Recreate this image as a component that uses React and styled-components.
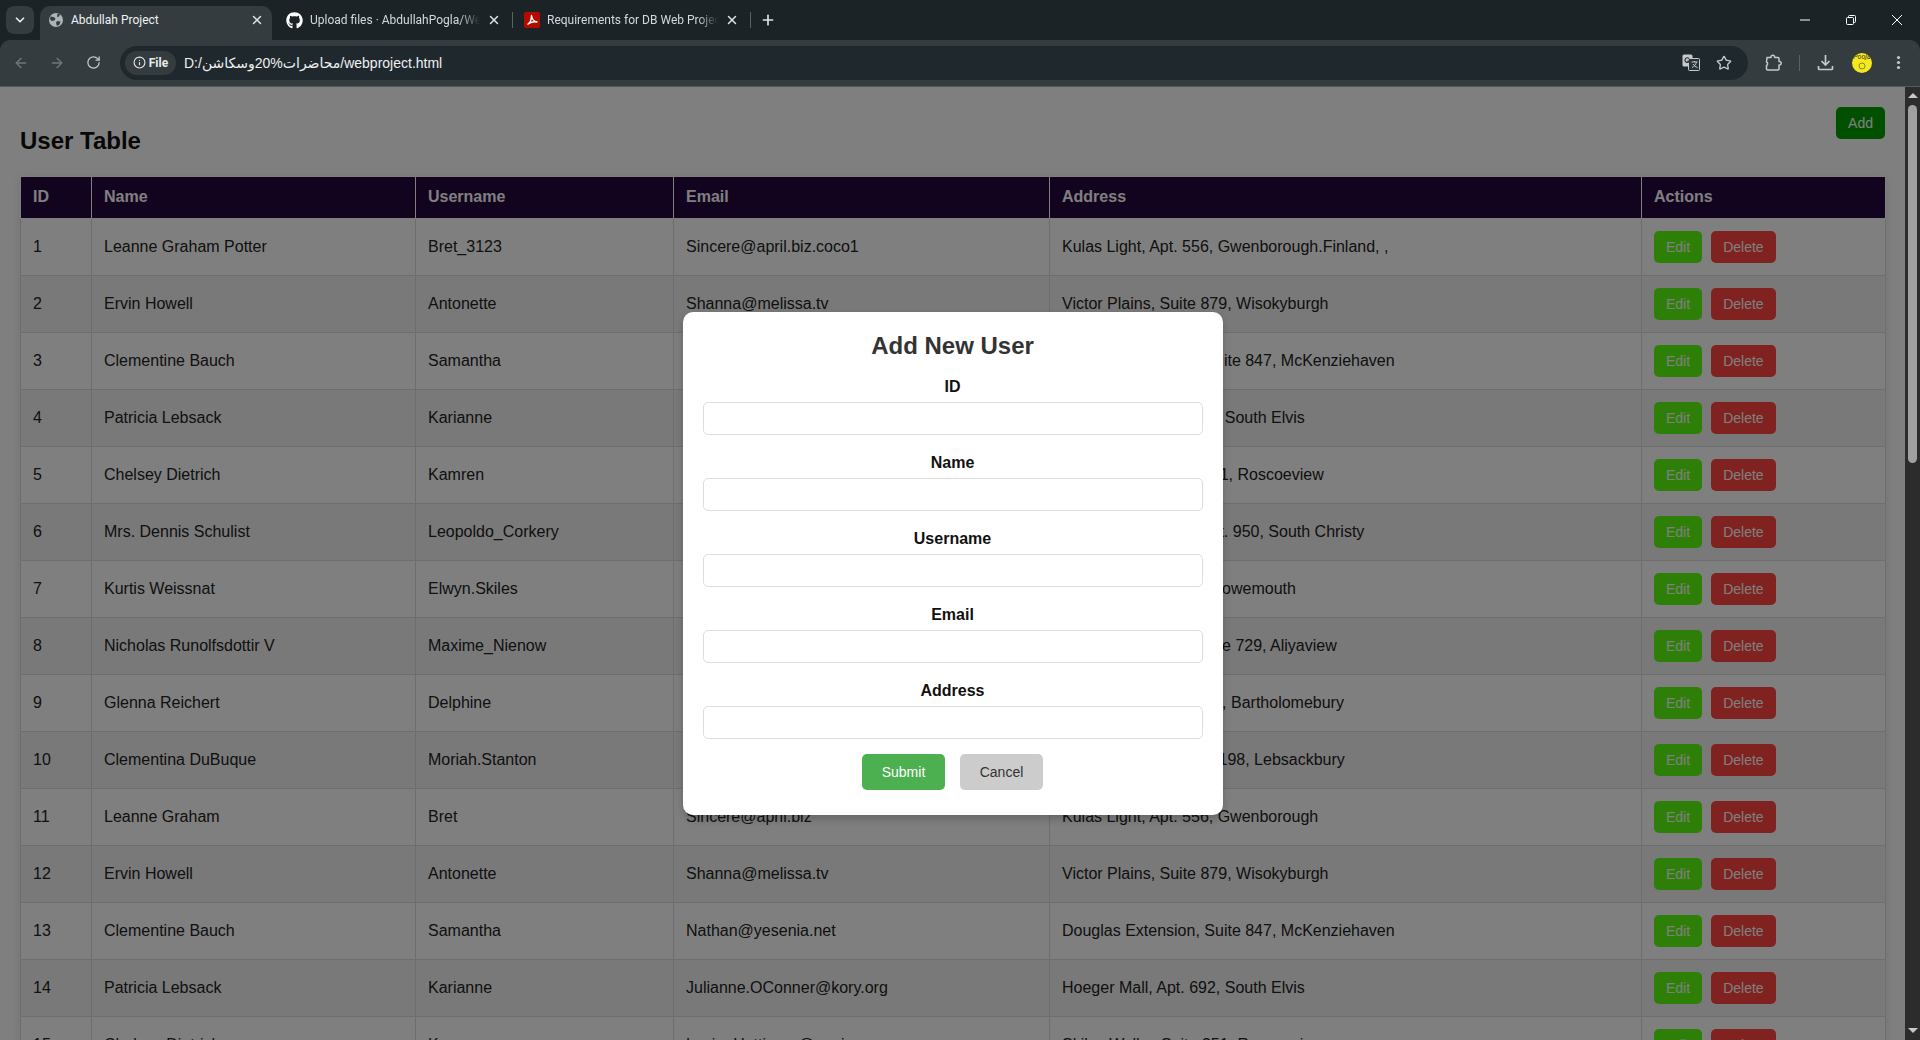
import React from 'react';
import styled, { createGlobalStyle } from 'styled-components';
import { ArrowLeft, ArrowRight, RotateCw, Info, Star, X, Plus, ChevronDown } from 'lucide-react';
import { FaGithub } from 'react-icons/fa';

const people = [
  ['Leanne Graham', 'Bret', 'Sincere@april.biz', 'Kulas Light, Apt. 556, Gwenborough'],
  ['Ervin Howell', 'Antonette', 'Shanna@melissa.tv', 'Victor Plains, Suite 879, Wisokyburgh'],
  ['Clementine Bauch', 'Samantha', 'Nathan@yesenia.net', 'Douglas Extension, Suite 847, McKenziehaven'],
  ['Patricia Lebsack', 'Karianne', 'Julianne.OConner@kory.org', 'Hoeger Mall, Apt. 692, South Elvis'],
  ['Chelsey Dietrich', 'Kamren', 'Lucio_Hettinger@annie.ca', 'Skiles Walks, Suite 351, Roscoeview'],
  ['Mrs. Dennis Schulist', 'Leopoldo_Corkery', 'Karley_Dach@jasper.info', 'Norberto Crossing, Apt. 950, South Christy'],
  ['Kurtis Weissnat', 'Elwyn.Skiles', 'Telly.Hoeger@billy.biz', 'Rex Trail, Suite 280, Howemouth'],
  ['Nicholas Runolfsdottir V', 'Maxime_Nienow', 'Sherwood@rosamond.me', 'Ellsworth Summit, Suite 729, Aliyaview'],
  ['Glenna Reichert', 'Delphine', 'Chaim_McDermott@dana.io', 'Dayna Park, Suite 449, Bartholomebury'],
  ['Clementina DuBuque', 'Moriah.Stanton', 'Rey.Padberg@karina.biz', 'Kattie Turnpike, Suite 198, Lebsackbury'],
];

const rows = [
  ['Leanne Graham Potter', 'Bret_3123', 'Sincere@april.biz.coco1', 'Kulas Light, Apt. 556, Gwenborough.Finland, ,'],
  ...people.slice(1),
  ...people.slice(0, 5),
];

const columns = [
  ['ID', 71],
  ['Name', 324],
  ['Username', 258],
  ['Email', 376],
  ['Address', 592],
  ['Actions', 244],
];

const fields = ['ID', 'Name', 'Username', 'Email', 'Address'];

const App = () => {
  return (
    <Window>
      <GlobalStyle />
      <TabStrip>
        <TabMenu>
          <ChevronDown size={14} strokeWidth={3} />
        </TabMenu>
        <Tab $active $start={8} $end={8} $width={232}>
          <GlobeIcon />
          <TabTitle $active>Abdullah Project</TabTitle>
          <X size={14} strokeWidth={2.5} />
        </Tab>
        <Tab $start={14} $end={12} $width={241} $divider>
          <FaGithub size={17} color='#fff' />
          <TabTitle>Upload files · AbdullahPogla/Web</TabTitle>
          <X size={14} strokeWidth={2.5} />
        </Tab>
        <Tab $start={11} $end={12} $width={238} $divider>
          <PdfIcon />
          <TabTitle>Requirements for DB Web Project</TabTitle>
          <X size={14} strokeWidth={2.5} />
        </Tab>
        <NewTab>
          <Plus size={16} strokeWidth={2.5} />
        </NewTab>
        <WindowControls>
          <WinButton>
            <svg width='12' height='12' viewBox='0 0 12 12'>
              <path d='M1 6h10' stroke='#fff' strokeWidth='1' />
            </svg>
          </WinButton>
          <WinButton>
            <svg width='12' height='12' viewBox='0 0 12 12' fill='none' stroke='#fff'>
              <rect x='1.5' y='3.5' width='7' height='7' rx='1' />
              <path d='M3.5 3.5v-1a1 1 0 0 1 1-1h5a1 1 0 0 1 1 1v5a1 1 0 0 1-1 1h-1' />
            </svg>
          </WinButton>
          <WinButton>
            <svg width='12' height='12' viewBox='0 0 12 12'>
              <path d='M1 1l10 10M11 1L1 11' stroke='#fff' strokeWidth='1' />
            </svg>
          </WinButton>
        </WindowControls>
      </TabStrip>

      <Toolbar>
        <NavIcon $dim>
          <ArrowLeft size={16} />
        </NavIcon>
        <NavIcon $dim>
          <ArrowRight size={16} />
        </NavIcon>
        <NavIcon>
          <RotateCw size={15} />
        </NavIcon>
        <AddressBar>
          <FileChip>
            <Info size={13} />
            File
          </FileChip>
          <Url>D:/محاضرات%20وسكاشن/webproject.html</Url>
          <AddressIcons>
            <TranslateIcon />
            <Star size={16} />
          </AddressIcons>
        </AddressBar>
        <ToolIcons>
          <PuzzleIcon />
          <ToolDivider />
          <DownloadIcon />
          <Avatar>
            <AvatarName>Pooja</AvatarName>
            <svg width='8' height='8' viewBox='0 0 8 8' fill='none' stroke='#8a8a20'>
              <circle cx='4' cy='4' r='3' />
            </svg>
          </Avatar>
          <MenuIcon />
        </ToolIcons>
      </Toolbar>

      <Viewport>
        <Page>
          <Content>
            <TopRow>
              <Title>User Table</Title>
              <AddButton>Add</AddButton>
            </TopRow>
            <Table>
              <colgroup>
                {columns.map(([name, width]) => (
                  <col key={name} width={width} />
                ))}
              </colgroup>
              <thead>
                <tr>
                  {columns.map(([name]) => (
                    <th key={name}>{name}</th>
                  ))}
                </tr>
              </thead>
              <tbody>
                {rows.map((row, index) => (
                  <tr key={index}>
                    <td>{index + 1}</td>
                    {row.map((cell) => (
                      <td key={cell}>{cell}</td>
                    ))}
                    <td>
                      <Actions>
                        <ActionButton $color='#5cff0f'>Edit</ActionButton>
                        <ActionButton $color='#ff4541'>Delete</ActionButton>
                      </Actions>
                    </td>
                  </tr>
                ))}
              </tbody>
            </Table>
          </Content>
          <Overlay>
            <Modal>
              <ModalTitle>Add New User</ModalTitle>
              {fields.map((field) => (
                <Field key={field}>
                  <FieldLabel>{field}</FieldLabel>
                  <FieldInput type='text' />
                </Field>
              ))}
              <ModalButtons>
                <ModalButton $bg='#4caf50' $color='#fff' type='button'>
                  Submit
                </ModalButton>
                <ModalButton $bg='#ccc' $color='#333' type='button'>
                  Cancel
                </ModalButton>
              </ModalButtons>
            </Modal>
          </Overlay>
        </Page>
        <Scrollbar>
          <ArrowUp />
          <Thumb />
          <ArrowDown />
        </Scrollbar>
      </Viewport>
    </Window>
  );
};

const GlobeIcon = () => (
  <svg width='16' height='16' viewBox='0 0 16 16'>
    <circle cx='8' cy='8' r='7' fill='#aeb4b7' />
    <path d='M2.500 4.500l3 .5 2 1.500-1 2-3 .5-1.500-2zM9.500 1.500l2.500 1-1 2-2 .5zM9 9l3.500 .5-1 3-2.500 1.500-1-3z' fill='#343c40' />
  </svg>
);

const PdfIcon = () => (
  <svg width='16' height='16' viewBox='0 0 16 16'>
    <rect width='16' height='16' rx='2' fill='#b30b00' />
    <path
      d='M3.500 12.500C6 11 7.500 7.500 7.500 3.500c.5 3.500 2 6 5.500 6.500-3-.5-6 0-8 1.500'
      fill='none'
      stroke='#fff'
      strokeWidth='1.400'
      strokeLinejoin='round'
    />
  </svg>
);

const TranslateIcon = () => (
  <svg width='18' height='17' viewBox='0 0 18 17'>
    <rect x='0.500' y='0.500' width='10' height='12' rx='1.500' fill='#c4c9cb' />
    <rect x='6.500' y='4.500' width='11' height='12' rx='1' fill='#2a3236' stroke='#c4c9cb' />
    <path d='M7 4.500a2.300 2.300 0 1 0 .3 2.700H5.400' fill='none' stroke='#2a3236' strokeWidth='1.200' />
    <path d='M9.500 8h6M12.500 7v1M14.500 8c-.7 2.500-2.300 4.500-4.500 5.500M11 10c.8 1.500 2.500 3 4.500 3.500' fill='none' stroke='#c4c9cb' />
  </svg>
);

const PuzzleIcon = () => (
  <svg width='17' height='17' viewBox='0 0 17 17' fill='none' stroke='#c4c9cb' strokeWidth='1.500' strokeLinejoin='round'>
    <path d='M2 3.500h4V3a1.800 1.800 0 0 1 3.600 0v.5h3.400a1 1 0 0 1 1 1v3h.4a1.800 1.800 0 0 1 0 3.600H14V15a1 1 0 0 1-1 1H2.500a1 1 0 0 1-1-1v-3.500a1.900 1.900 0 0 0 0-3.500L2 3.500z' />
  </svg>
);

const DownloadIcon = () => (
  <svg width='17' height='17' viewBox='0 0 17 17' fill='none' stroke='#c4c9cb' strokeWidth='1.700'>
    <path d='M8.500 1v9.500M4.500 7l4 4 4-4' />
    <path d='M1.500 12v2.500a1 1 0 0 0 1 1h12a1 1 0 0 0 1-1V12' />
  </svg>
);

const MenuIcon = () => (
  <svg width='17' height='17' viewBox='0 0 17 17' fill='#c4c9cb'>
    <circle cx='8.500' cy='3.500' r='1.600' />
    <circle cx='8.500' cy='8.500' r='1.600' />
    <circle cx='8.500' cy='13.500' r='1.600' />
  </svg>
);

const GlobalStyle = createGlobalStyle`
  html, body {
    margin: 0;
    height: 100%;
    overflow: hidden;
    background: #1b2327;
  }
  * {
    box-sizing: border-box;
  }
`;

const Window = styled.div`
  width: 1920px;
  height: 1040px;
  display: flex;
  flex-direction: column;
  overflow: hidden;
  background: #1b2327;
  font-family: 'Liberation Sans', Arial, sans-serif;
`;

const TabStrip = styled.div`
  height: 40px;
  flex: none;
  display: flex;
  align-items: flex-end;
  padding-left: 6px;
  color: #dfe3e5;
  font-family: Roboto, 'Open Sans', sans-serif;
`;

const TabMenu = styled.div`
  width: 28px;
  height: 28px;
  margin-bottom: 6px;
  border-radius: 8px;
  display: flex;
  align-items: center;
  justify-content: center;
  background: #343c40;
  color: #e6e9ea;
`;

const Tab = styled.div`
  position: relative;
  width: ${(p) => p.$width}px;
  height: 34px;
  margin-left: ${(p) => (p.$active ? '6px' : '0')};
  padding: 0 ${(p) => p.$end}px 6px ${(p) => p.$start}px;
  display: flex;
  align-items: center;
  gap: 7px;
  border-radius: 10px 10px 0 0;
  background: ${(p) => (p.$active ? '#343c40' : 'transparent')};
  flex: none;
  svg {
    flex: none;
  }
  &::after {
    content: '';
    display: ${(p) => (p.$divider ? 'block' : 'none')};
    position: absolute;
    right: 0;
    top: 6px;
    width: 1px;
    height: 16px;
    background: #5a6266;
  }
`;

const TabTitle = styled.span`
  flex: 1;
  min-width: 0;
  font-size: 12px;
  white-space: nowrap;
  overflow: hidden;
  color: ${(p) => (p.$active ? '#f0f2f3' : '#d5d9db')};
  mask-image: ${(p) => (p.$active ? 'none' : 'linear-gradient(to right, #000 88%, transparent)')};
`;

const NewTab = styled.div`
  width: 28px;
  height: 28px;
  margin: 0 0 6px 3px;
  display: flex;
  align-items: center;
  justify-content: center;
  color: #dfe3e5;
`;

const WindowControls = styled.div`
  margin-left: auto;
  height: 40px;
  display: flex;
  align-items: center;
`;

const WinButton = styled.div`
  width: 46px;
  display: flex;
  justify-content: center;
`;

const Toolbar = styled.div`
  height: 47px;
  flex: none;
  display: flex;
  align-items: center;
  padding: 0 0 1px 6px;
  background: #343c40;
  border-bottom: 1px solid #555b5e;
  border-radius: 10px 10px 0 0;
  font-family: Roboto, 'Open Sans', sans-serif;
`;

const NavIcon = styled.div`
  width: 30px;
  margin-right: 6px;
  display: flex;
  justify-content: center;
  color: ${(p) => (p.$dim ? '#6f777b' : '#c4c9cb')};
`;

const AddressBar = styled.div`
  width: 1628px;
  height: 34px;
  margin-left: 6px;
  padding: 0 16px 0 5px;
  display: flex;
  align-items: center;
  border-radius: 17px;
  background: #1f282c;
  color: #e8eaeb;
  flex: none;
`;

const FileChip = styled.div`
  width: 51px;
  height: 24px;
  display: flex;
  align-items: center;
  justify-content: center;
  gap: 3px;
  border-radius: 12px;
  background: #343c40;
  font-size: 12px;
  font-weight: 700;
`;

const Url = styled.span`
  margin-left: 8px;
  font-family: 'Liberation Sans', 'DejaVu Sans', sans-serif;
  font-size: 14px;
  color: #eef0f1;
`;

const AddressIcons = styled.div`
  margin-left: auto;
  display: flex;
  align-items: center;
  gap: 16px;
  color: #c4c9cb;
`;

const ToolIcons = styled.div`
  margin-left: 17px;
  display: flex;
  align-items: center;
`;

const ToolDivider = styled.div`
  width: 1px;
  height: 16px;
  margin: 0 17px;
  background: #5a6266;
`;

const Avatar = styled.div`
  width: 20px;
  height: 20px;
  margin: 0 18px;
  border-radius: 50%;
  background: #f6e81e;
  display: flex;
  flex-direction: column;
  align-items: center;
  overflow: hidden;
`;

const AvatarName = styled.span`
  font-size: 7px;
  line-height: 9px;
  color: #333;
  font-style: italic;
`;

const Viewport = styled.div`
  flex: 1;
  min-height: 0;
  display: flex;
`;

const Page = styled.div`
  position: relative;
  flex: 1;
  min-width: 0;
  overflow: hidden;
  background: #fff;
`;

const Content = styled.div`
  padding: 20px;
`;

const TopRow = styled.div`
  height: 69px;
  display: flex;
  justify-content: space-between;
  align-items: flex-start;
`;

const Title = styled.h2`
  margin: 20px 0 0 0;
  font-size: 24px;
  line-height: 27px;
  color: #111;
`;

const AddButton = styled.button`
  height: 32px;
  padding: 0 12px;
  border: 0;
  border-radius: 5px;
  background: #00a000;
  color: #fff;
  font: 14px 'Liberation Sans', Arial, sans-serif;
`;

const Table = styled.table`
  width: 100%;
  table-layout: fixed;
  border-collapse: collapse;
  box-shadow: 0 2px 10px rgba(0, 0, 0, 0.1);
  font-size: 16px;
  color: #222;
  th,
  td {
    border: 1px solid #ddd;
    text-align: left;
    white-space: nowrap;
  }
  th {
    height: 42px;
    padding: 0 12px 2px;
    background: #24063f;
    border-color: #fff;
    color: #fff;
    font-weight: bold;
  }
  td {
    height: 57px;
    padding: 0 12px;
  }
  tbody tr:nth-child(even) td {
    background: #f2f2f2;
  }
`;

const Actions = styled.div`
  display: flex;
  gap: 9px;
`;

const ActionButton = styled.button`
  height: 32px;
  padding: 0 12px;
  border: 0;
  border-radius: 5px;
  background: ${(p) => p.$color};
  color: #fff;
  font: 14px 'Liberation Sans', Arial, sans-serif;
`;

const Overlay = styled.div`
  position: absolute;
  inset: 0;
  display: flex;
  align-items: center;
  justify-content: center;
  background: rgba(0, 0, 0, 0.5);
`;

const Modal = styled.div`
  width: 540px;
  height: 503px;
  padding: 20px;
  border-radius: 10px;
  background: #fff;
  box-shadow: 0 4px 8px rgba(0, 0, 0, 0.2);
`;

const ModalTitle = styled.h2`
  margin: 0 0 19px;
  font-size: 24px;
  line-height: 27px;
  text-align: center;
  color: #333;
`;

const Field = styled.div`
  margin-bottom: 19px;
  display: flex;
  flex-direction: column;
  align-items: center;
`;

const FieldLabel = styled.label`
  margin-bottom: 6px;
  font-size: 16px;
  line-height: 18px;
  font-weight: bold;
  color: #111;
`;

const FieldInput = styled.input`
  width: 100%;
  height: 33px;
  border: 1px solid #ddd;
  border-radius: 5px;
  background: #fff;
`;

const ModalButtons = styled.div`
  margin-top: -4px;
  display: flex;
  justify-content: center;
  gap: 15px;
`;

const ModalButton = styled.button`
  width: 83px;
  height: 36px;
  border: 0;
  border-radius: 5px;
  background: ${(p) => p.$bg};
  color: ${(p) => p.$color};
  font: 14px 'Liberation Sans', Arial, sans-serif;
`;

const Scrollbar = styled.div`
  width: 15px;
  flex: none;
  display: flex;
  flex-direction: column;
  align-items: center;
  background: #2c2c2c;
`;

const ArrowUp = styled.div`
  margin-top: 6px;
  border-left: 5px solid transparent;
  border-right: 5px solid transparent;
  border-bottom: 5px solid #c8c8c8;
`;

const Thumb = styled.div`
  width: 9px;
  height: 358px;
  margin-top: 7px;
  border-radius: 5px;
  background: #a0a0a0;
`;

const ArrowDown = styled.div`
  margin-top: auto;
  margin-bottom: 7px;
  border-left: 5px solid transparent;
  border-right: 5px solid transparent;
  border-top: 5px solid #c8c8c8;
`;

export default App;
